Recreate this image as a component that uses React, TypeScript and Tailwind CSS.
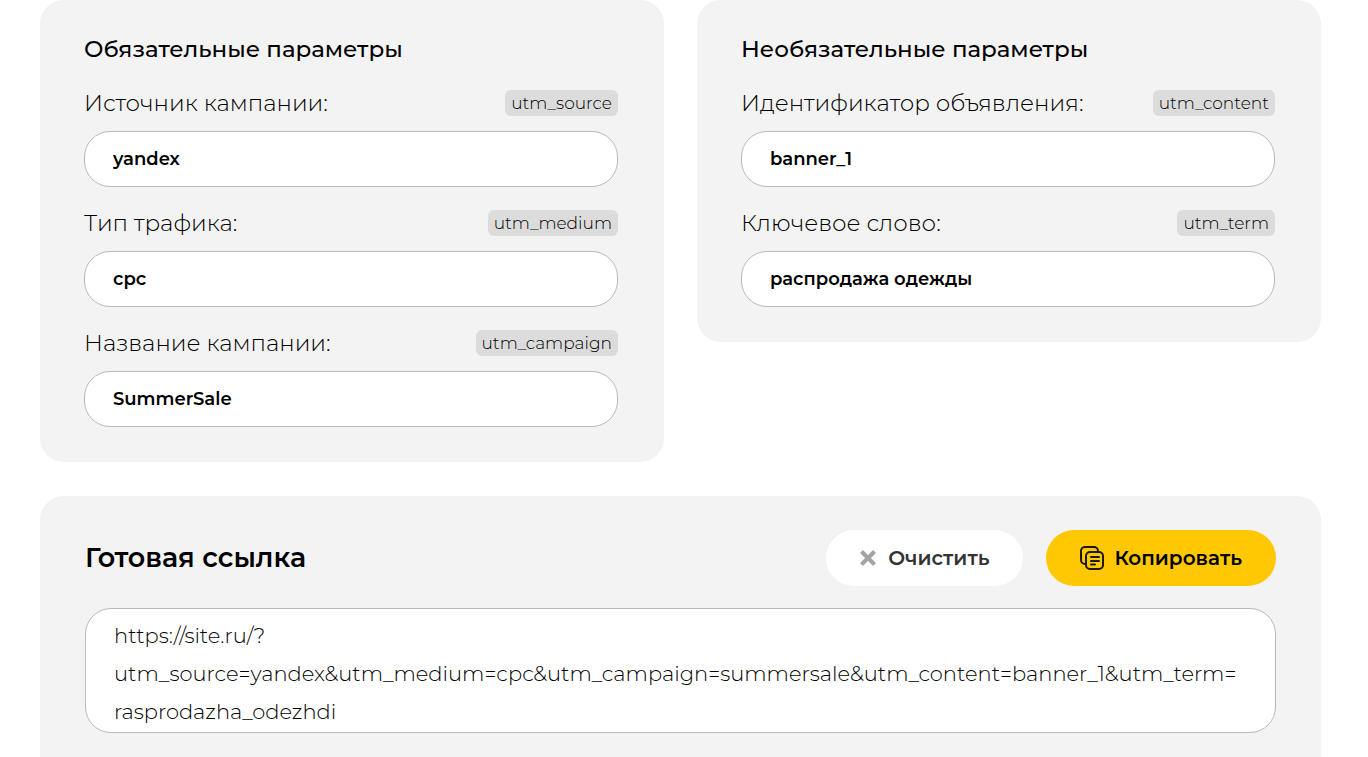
import { useState } from 'react';

const requiredFields = [
  { name: 'utm_source', label: 'Источник кампании:', value: 'yandex' },
  { name: 'utm_medium', label: 'Тип трафика:', value: 'cpc' },
  { name: 'utm_campaign', label: 'Название кампании:', value: 'SummerSale' },
];

const optionalFields = [
  { name: 'utm_content', label: 'Идентификатор объявления:', value: 'banner_1' },
  { name: 'utm_term', label: 'Ключевое слово:', value: 'распродажа одежды' },
];

const resultUrl = [
  'https://site.ru/?',
  'utm_source=yandex&utm_medium=cpc&utm_campaign=summersale&utm_content=banner_1&utm_term=',
  'rasprodazha_odezhdi',
].join('\n');

type Field = { name: string; label: string; value: string };

function FieldCard({ title, fields }: { title: string; fields: Field[] }) {
  return (
    <section className="flex-1 min-w-0 rounded-3xl bg-[#f3f3f3] pt-[33px] pb-[35px] pl-11 pr-[46px]">
      <h2 className="text-[23px] leading-8 font-medium mb-[25px]">{title}</h2>
      <div className="flex flex-col gap-[23px]">
        {fields.map((field) => (
          <div key={field.name}>
            <div className="flex items-center justify-between mb-[15px]">
              <label htmlFor={field.name} className="text-[23px] leading-[26px] font-light">
                {field.label}
              </label>
              <span className="rounded-md bg-[#dcdcdc] px-1.5 text-[17px] leading-[26px] font-light">
                {field.name}
              </span>
            </div>
            <input
              id={field.name}
              type="text"
              defaultValue={field.value}
              className="block w-full h-14 rounded-[26px] border border-[#bababa] bg-white px-7 text-[18px] font-semibold outline-none"
            />
          </div>
        ))}
      </div>
    </section>
  );
}

function CrossIcon() {
  return (
    <svg width="16" height="16" viewBox="0 0 16 16" fill="none" stroke="#a3a3a3" strokeWidth="4" aria-hidden="true">
      <path d="M1.5 1.5l13 13M14.5 1.5l-13 13" />
    </svg>
  );
}

function CopyIcon() {
  return (
    <svg
      width="24"
      height="24"
      viewBox="0 0 24 24"
      fill="none"
      stroke="#1c1a10"
      strokeWidth="2"
      strokeLinecap="round"
      strokeLinejoin="round"
      aria-hidden="true"
    >
      <rect x="6" y="6" width="17" height="17" rx="4" />
      <path d="M6 18H5a4 4 0 0 1-4-4V5a4 4 0 0 1 4-4h9a4 4 0 0 1 4 4v1" />
      <path d="M11 11h8M11 15h8M11 18.500h4" />
    </svg>
  );
}

export default function App() {
  const [url, setUrl] = useState(resultUrl);

  return (
    <main className="min-h-screen flex flex-col gap-[34px] bg-white pl-10 pr-[47px] text-black font-['Montserrat','Inter',sans-serif]">
      <div className="flex items-start gap-[33px]">
        <FieldCard title="Обязательные параметры" fields={requiredFields} />
        <FieldCard title="Необязательные параметры" fields={optionalFields} />
      </div>

      <section className="grow rounded-t-3xl bg-[#f3f3f3] pt-[34px] pb-6 px-[45px]">
        <div className="flex items-center justify-between mb-[22px]">
          <h2 className="text-[27px] leading-9 font-semibold">
            <label htmlFor="result">Готовая ссылка</label>
          </h2>
          <div className="flex gap-[23px]">
            <button
              type="button"
              onClick={() => setUrl('')}
              className="flex h-14 items-center gap-3 rounded-full bg-white px-[34px] text-[20px] font-semibold text-[#333333]"
            >
              <CrossIcon />
              Очистить
            </button>
            <button
              type="button"
              onClick={() => navigator.clipboard?.writeText(url.replace(/\n/g, ''))}
              className="flex h-14 items-center gap-2.5 rounded-full bg-[#ffc803] px-[34px] text-[20px] font-semibold"
            >
              <CopyIcon />
              Копировать
            </button>
          </div>
        </div>
        <textarea
          id="result"
          rows={3}
          value={url}
          onChange={(e) => setUrl(e.target.value)}
          className="block w-full resize-none overflow-hidden rounded-[26px] border border-[#bababa] bg-white pt-2 pb-px px-7 text-[21px] leading-[38px] font-light outline-none"
        />
      </section>
    </main>
  );
}
